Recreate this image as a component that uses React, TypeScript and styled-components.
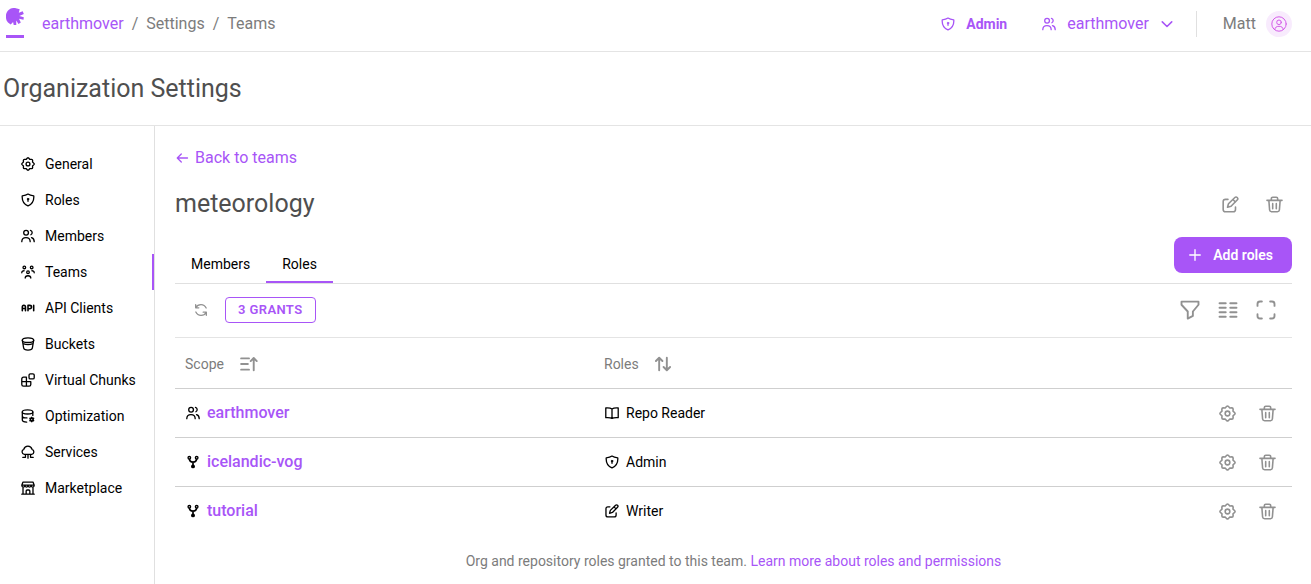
import React from "react";
import styled, { createGlobalStyle } from "styled-components";

const purple = "#a855f7";

const GlobalStyle = createGlobalStyle`
  *, *::before, *::after { box-sizing: border-box; }
  body {
    margin: 0;
    background: #fff;
    color: #000;
    font-family: Roboto, "Liberation Sans", sans-serif;
    font-size: 14px;
    line-height: 20px;
  }
  a { color: ${purple}; text-decoration: none; }
  button { font: inherit; background: none; border: 0; padding: 0; cursor: pointer; }
`;

const Svg = styled.svg<{ $size: number }>`
  width: ${(p) => p.$size}px;
  height: ${(p) => p.$size}px;
  flex: none;
  display: block;
  fill: none;
  stroke: currentColor;
  stroke-width: 1.5;
  stroke-linecap: round;
  stroke-linejoin: round;
`;

const glyphs = {
  gear: (
    <>
      <path d="M7.300 1.200Q8 .6 8.700 1.200L10.200 2.800 12.100 2.700Q13.200 2.800 13.300 3.900L13.200 5.800 14.800 7.300Q15.400 8 14.800 8.700L13.200 10.200 13.300 12.100Q13.200 13.200 12.100 13.300L10.200 13.200 8.700 14.800Q8 15.400 7.300 14.800L5.800 13.200 3.900 13.300Q2.800 13.200 2.700 12.100L2.800 10.200 1.200 8.700Q.6 8 1.200 7.300L2.800 5.800 2.700 3.900Q2.800 2.800 3.900 2.700L5.800 2.800Z" />
      <circle cx="8" cy="8" r="2.200" />
    </>
  ),
  shield: (
    <>
      <path d="M8 1.200C6.400 2.400 4.100 3 1.400 3.200 1 8.600 3 12.800 8 14.800 13 12.800 15 8.600 14.600 3.200 11.900 3 9.600 2.400 8 1.200Z" />
      <circle cx="8" cy="6.900" r=".9" fill="currentColor" strokeWidth="1" />
      <path d="M8 7.500v2" />
    </>
  ),
  people: (
    <>
      <circle cx="5.800" cy="4.200" r="2.700" />
      <path d="M.9 14.500C.9 11.400 2.900 9.800 5.700 9.800S10.500 11.400 10.500 14.500M10.800 1.600a2.700 2.700 0 0 1 .5 5M12 9.900c1.900.5 3.100 2.200 3.100 4.600" />
    </>
  ),
  team: (
    <>
      <circle cx="3.800" cy="2.800" r="1.500" />
      <circle cx="12.200" cy="2.800" r="1.500" />
      <circle cx="8" cy="8.300" r="1.500" />
      <path d="M.9 8.900C.9 7.500 2 6.600 3.500 6.600M15.100 8.900C15.100 7.500 14 6.600 12.500 6.600M4.800 14.900C4.800 13.200 6 12.300 8 12.300s3.200.9 3.200 2.600" />
    </>
  ),
  api: <path d="M1.500 11V7c0-1.500.8-2.200 1.800-2.200S5.100 5.500 5.100 7v4M1.500 8.600h3.600M8 11V5h2c1.300 0 2 .7 2 1.900S11.300 8.800 10 8.800H8M14.500 5v6" strokeWidth="1.800" />,
  bucket: (
    <>
      <ellipse cx="8" cy="3.700" rx="6.500" ry="2.600" />
      <path d="M1.500 3.700 3 12.500C3.300 14.200 5.200 15 8 15s4.700-.8 5-2.500L14.500 3.700M2.400 7.600c3.200 1.300 8 1.300 11.200 0" />
    </>
  ),
  chunks: (
    <>
      <path d="M6.200 4.800H2.800C1.700 4.800.9 5.600.9 6.700v6.500c0 1.100.8 1.900 1.900 1.900h6.500c1.100 0 1.900-.8 1.900-1.900V9.900M.9 9.900h10.300M6.200 4.800v10.300" />
      <rect x="9.200" y=".9" width="5.900" height="5.900" rx="1.500" />
    </>
  ),
  database: (
    <>
      <ellipse cx="7.500" cy="3.300" rx="6" ry="2.400" />
      <path d="M1.500 3.300v9.200c0 1.200 2 2.200 5 2.500M13.500 3.300v4M1.500 7.900c0 1.300 2.300 2.200 5.300 2.300" />
      <path d="m12.300 9.500.6 1.300 1.500-.1-.8 1.300.8 1.300-1.500-.1-.6 1.300-.7-1.300-1.400.1.800-1.300-.8-1.300 1.400.1Z" strokeWidth="1.700" />
    </>
  ),
  cloud: (
    <path d="M3.800 10.700A3 3 0 0 1 3.200 4.900 4.900 4.900 0 0 1 12.600 4.900 3 3 0 0 1 12.300 10.700H3.800M5.100 11v3.100H2M8 11v4M10.900 11v3.100H14" />
  ),
  store: (
    <path d="M2.300 1.200h11.400L15.100 4.800H.9ZM.9 4.800c0 2.800 3.500 2.800 3.600 0 .1 2.800 3.400 2.800 3.500 0 .1 2.800 3.400 2.800 3.500 0 .1 2.800 3.600 2.800 3.600 0M2.300 7v8M13.700 7v8M.9 15h14.200M5.900 15v-3.500c0-.7.500-1.200 1.200-1.200h1.800c.7 0 1.200.5 1.200 1.200V15" />
  ),
  fork: (
    <>
      <circle cx="3.800" cy="3.200" r="1.500" />
      <circle cx="12.200" cy="3.200" r="1.500" />
      <circle cx="8" cy="13" r="1.500" fill="currentColor" />
      <path d="M3.900 4.900c.2 2.300 1.700 3.300 4.100 3.300s3.900-1 4.100-3.300M8 8.200v4" strokeWidth="1.900" />
    </>
  ),
  book: <path d="M8 3.400C6.400 2.300 3.700 2.100.9 2.300V13.300C3.700 13.100 6.400 13.200 8 14.200 9.600 13.200 12.300 13.100 15.100 13.300V2.300C12.300 2.100 9.600 2.300 8 3.400V13.800" />,
  pencil: (
    <>
      <path d="m12.100 1.400c.7-.7 1.600-.6 2.200 0s.8 1.600 0 2.400L8.500 9.700l-3.300.9.900-3.300ZM10.300 3.300l2.300 2.300" />
      <path d="M5.600 3.200H3.300c-1.300 0-2.200.9-2.200 2.200v7.200c0 1.300.9 2.200 2.200 2.200h7.200c1.300 0 2.200-.9 2.200-2.200v-2.300" />
    </>
  ),
  trash: (
    <path d="M.9 4.100h14.200M5 3.900V2.500C5 1.700 5.600 1.200 6.300 1.200h3.400c.7 0 1.300.5 1.300 1.300v1.400M2.700 4.200l.7 9c.1 1 .8 1.600 1.900 1.600h5.400c1.100 0 1.800-.6 1.900-1.600l.7-9M6.300 7.200v4.800M9.700 7.200v4.800" />
  ),
  refresh: (
    <path d="M1.900 1.900v3.600h3.600M2.200 5.200C4.500.8 11.500.5 13.900 5.700M14.100 14.100v-3.600h-3.600M13.800 10.800c-2.300 4.400-9.300 4.700-11.700-.5" />
  ),
  arrowLeft: <path d="M14.300 8H2.700M7.200 3.400 2.600 8l4.600 4.600" />,
  chevron: <path d="m2.600 5.600 5.400 5.200 5.400-5.200" strokeWidth="1.800" />,
  plus: <path d="M8 1v14M1 8h14" strokeWidth="1.800" />,
  avatar: (
    <>
      <circle cx="8" cy="8" r="7.200" />
      <circle cx="8" cy="6.300" r="2.300" />
      <path d="M3.800 13.500c.2-2.200 1.700-3.200 4.200-3.200s4 1 4.200 3.200" />
    </>
  ),
  funnel: <path d="M1.200 1.300h13.600v2.500L10.300 9.200v3.500L6.200 14.900V9.200L1.200 3.800Z" />,
  columns: <path d="M1.200 2.600h5M1.200 6.200h5M1.200 9.800h5M1.200 13.400h5M9.800 2.600h5M9.800 6.200h5M9.800 9.800h5M9.800 13.400h5" />,
  expand: <path d="M1.200 4.700V3.200c0-1.100.9-2 2-2h1.500M11.300 1.200h1.500c1.100 0 2 .9 2 2v1.500M14.800 11.300v1.500c0 1.100-.9 2-2 2h-1.500M4.700 14.800H3.200c-1.100 0-2-.9-2-2v-1.500" />,
  sortAsc: <path d="M1 3h7M1 8h6M1 13h7M12.200 13.500V3M9.500 5.400l2.700-2.700 2.700 2.700" strokeWidth="1.700" />,
  sort: <path d="M4.600 13.500V2.700M1.700 5.300l2.900-2.900 2.900 2.900M11.400 2.500v10.800M8.500 10.700l2.900 2.900 2.900-2.900" strokeWidth="1.700" />,
};

type Glyph = keyof typeof glyphs;

function Icon({ name, size = 14 }: { name: Glyph; size?: number }) {
  return (
    <Svg $size={size} viewBox="0 0 16 16" aria-hidden="true">
      {glyphs[name]}
    </Svg>
  );
}

const Header = styled.header`
  display: flex;
  align-items: center;
  justify-content: space-between;
  height: 52px;
  padding: 0 19px 4px 6px;
  border-bottom: 1px solid #e4e4e4;
  font-size: 16px;
  line-height: 24px;
  color: #7c7c7c;
`;

const HeaderGroup = styled.div`
  display: flex;
  align-items: center;
`;

const Logo = styled.a`
  display: block;
  height: 32px;
  margin-right: 18px;
`;

const Crumbs = styled.ol`
  display: flex;
  gap: 8px;
  margin: 0;
  padding: 0;
  list-style: none;

  a { color: inherit; }
  li:first-child a { color: ${purple}; }
`;

const AdminLink = styled.a`
  display: flex;
  align-items: center;
  gap: 11px;
  margin-right: 35px;
  font-size: 14px;
  font-weight: 700;
`;

const OrgButton = styled.button`
  display: flex;
  align-items: center;
  gap: 11px;
  color: ${purple};
`;

const UserButton = styled.button`
  display: flex;
  align-items: center;
  gap: 10px;
  height: 26px;
  margin-left: 22px;
  padding-left: 26px;
  border-left: 1px solid #e0e0e0;
  color: #7c7c7c;
`;

const Avatar = styled.span`
  display: grid;
  place-items: center;
  width: 26px;
  height: 26px;
  border-radius: 50%;
  background: #f8ebfd;
  color: #d45be8;

  svg { stroke-width: 1; }
`;

const PageTitle = styled.div`
  display: flex;
  align-items: center;
  height: 74px;
  padding: 0 3px;
  border-bottom: 1px solid #e4e4e4;
`;

const Heading = styled.span`
  margin: 0;
  font-size: 25px;
  font-weight: 400;
  line-height: 32px;
  color: #4f4f4f;
`;

const Body = styled.div`
  display: flex;
  min-height: calc(100vh - 126px);
`;

const Sidebar = styled.nav`
  flex: none;
  width: 155px;
  padding-top: 20px;
  border-right: 1px solid #e0e0e0;
`;

const NavItem = styled.a<{ $active?: boolean }>`
  display: flex;
  align-items: center;
  gap: 10px;
  height: 36px;
  padding-left: 21px;
  border-right: 2px solid ${(p) => (p.$active ? purple : "transparent")};
  color: #000;
  white-space: nowrap;
`;

const Main = styled.main`
  flex: 1;
  min-width: 0;
  padding: 20px 19px 0 20px;
`;

const BackLink = styled.a`
  display: inline-flex;
  align-items: center;
  gap: 6px;
  font-size: 16px;
  line-height: 24px;
`;

const TitleRow = styled.div`
  display: flex;
  align-items: center;
  justify-content: space-between;
  height: 68px;
`;

const Actions = styled.div<{ $gap: number; $pad: number }>`
  display: flex;
  align-items: center;
  justify-content: flex-end;
  gap: ${(p) => p.$gap}px;
  padding-right: ${(p) => p.$pad}px;
`;

const IconButton = styled.button`
  color: #919191;
`;

const TabBar = styled.div`
  display: flex;
  justify-content: space-between;
  height: 46px;
  border-bottom: 1px solid #e0e0e0;
`;

const Tabs = styled.div`
  display: flex;
  padding-top: 8px;
`;

const Tab = styled.button<{ $active?: boolean }>`
  padding: 0 16px;
  border-bottom: 2px solid ${(p) => (p.$active ? purple : "transparent")};
  color: #000;
`;

const AddButton = styled.button`
  display: flex;
  align-items: center;
  gap: 12px;
  height: 36px;
  padding: 0 19px 0 15px;
  margin-top: -1px;
  border-radius: 8px;
  background: ${purple};
  color: #fff;
  font-weight: 600;
`;

const Toolbar = styled.div`
  display: flex;
  align-items: center;
  justify-content: space-between;
  height: 54px;
  padding: 0 0 2px 19px;
  border-bottom: 1px solid #e4e4e4;
`;

const Filters = styled.div`
  display: flex;
  align-items: center;
  gap: 17px;
`;

const Chip = styled.button`
  height: 26px;
  padding: 0 12px;
  border: 1px solid ${purple};
  border-radius: 4px;
  color: ${purple};
  font-size: 13px;
  font-weight: 600;
  letter-spacing: 0.4px;
`;

const Table = styled.table`
  width: 100%;
  table-layout: fixed;
  border-collapse: separate;
  border-spacing: 0;
  text-align: left;

  th, td { padding: 0 10px; }
  th { height: 51px; font-weight: 400; color: #7c7c7c; padding-top: 2px; }
  td { height: 49px; }
  th, tr:not(:last-child) td { border-bottom: 1px solid #cfcfcf; }
  tr:last-child td { height: 48px; }
  th:nth-child(1) { width: 419px; }
  th:nth-child(3) { width: 120px; }
`;

const Cell = styled.div<{ $gap: number; $inset?: number }>`
  display: flex;
  align-items: center;
  gap: ${(p) => p.$gap}px;
  padding-left: ${(p) => p.$inset ?? 0}px;
`;

const ScopeLink = styled.a`
  font-size: 16px;
  font-weight: 500;
`;

const Footnote = styled.p`
  margin: 0;
  padding: 16px 0 12px;
  text-align: center;
  color: #7c7c7c;
`;

const nav: [Glyph, string][] = [
  ["gear", "General"],
  ["shield", "Roles"],
  ["people", "Members"],
  ["team", "Teams"],
  ["api", "API Clients"],
  ["bucket", "Buckets"],
  ["chunks", "Virtual Chunks"],
  ["database", "Optimization"],
  ["cloud", "Services"],
  ["store", "Marketplace"],
];

const grants: { icon: Glyph; scope: string; roleIcon: Glyph; role: string }[] = [
  { icon: "people", scope: "earthmover", roleIcon: "book", role: "Repo Reader" },
  { icon: "fork", scope: "icelandic-vog", roleIcon: "shield", role: "Admin" },
  { icon: "fork", scope: "tutorial", roleIcon: "pencil", role: "Writer" },
];

export default function App() {
  return (
    <>
      <GlobalStyle />
      <Header>
        <HeaderGroup>
          <Logo href="#" aria-label="Home">
            <svg width="18" height="32" viewBox="0 0 18 32" fill={purple} aria-hidden="true">
              <path d="M9 0 13.700 1.300 12.800 4.700 16.700 3.300 17.800 6 13.300 7.900 17.800 9.200 17.500 11.800 13 10.700 14.800 14.600 12.500 16 10.200 12.400 10.300 17H7.700L7.100 14 4.700 16.400 2 14.500.6 12.500C-.8 8.500-.2 4.500 2.600 2 4.500.3 6.700-.2 9 0Z" />
              <rect y="27" width="18" height="3" />
            </svg>
          </Logo>
          <nav aria-label="Breadcrumb">
            <Crumbs>
              <li><a href="#">earthmover</a></li>
              <li aria-hidden="true">/</li>
              <li><a href="#">Settings</a></li>
              <li aria-hidden="true">/</li>
              <li><a href="#">Teams</a></li>
            </Crumbs>
          </nav>
        </HeaderGroup>
        <HeaderGroup>
          <AdminLink href="#"><Icon name="shield" />Admin</AdminLink>
          <OrgButton><Icon name="people" />earthmover<Icon name="chevron" /></OrgButton>
          <UserButton>Matt<Avatar><Icon name="avatar" size={16} /></Avatar></UserButton>
        </HeaderGroup>
      </Header>
      <PageTitle><Heading as="h1">Organization Settings</Heading></PageTitle>
      <Body>
        <Sidebar aria-label="Settings">
          {nav.map(([icon, label]) => (
            <NavItem key={label} href="#" $active={label === "Teams"}>
              <Icon name={icon} />{label}
            </NavItem>
          ))}
        </Sidebar>
        <Main>
          <BackLink href="#"><Icon name="arrowLeft" />Back to teams</BackLink>
          <TitleRow>
            <Heading as="h2">meteorology</Heading>
            <Actions $gap={27} $pad={9}>
              <IconButton aria-label="Edit team"><Icon name="pencil" size={17} /></IconButton>
              <IconButton aria-label="Delete team"><Icon name="trash" size={17} /></IconButton>
            </Actions>
          </TitleRow>
          <TabBar>
            <Tabs role="tablist">
              <Tab role="tab" aria-selected={false}>Members</Tab>
              <Tab role="tab" aria-selected $active>Roles</Tab>
            </Tabs>
            <AddButton><Icon name="plus" size={12} />Add roles</AddButton>
          </TabBar>
          <Toolbar>
            <Filters>
              <IconButton aria-label="Refresh"><Icon name="refresh" /></IconButton>
              <Chip>3 GRANTS</Chip>
            </Filters>
            <Actions $gap={18} $pad={16}>
              <IconButton aria-label="Filter"><Icon name="funnel" size={20} /></IconButton>
              <IconButton aria-label="Columns"><Icon name="columns" size={20} /></IconButton>
              <IconButton aria-label="Full screen"><Icon name="expand" size={20} /></IconButton>
            </Actions>
          </Toolbar>
          <Table>
            <thead>
              <tr>
                <th><Cell $gap={16}>Scope<IconButton aria-label="Sorted by scope"><Icon name="sortAsc" size={18} /></IconButton></Cell></th>
                <th><Cell $gap={15}>Roles<IconButton aria-label="Sort by roles"><Icon name="sort" size={18} /></IconButton></Cell></th>
                <th aria-label="Actions" />
              </tr>
            </thead>
            <tbody>
              {grants.map((g) => (
                <tr key={g.scope}>
                  <td><Cell $gap={7} $inset={1}><Icon name={g.icon} /><ScopeLink href="#">{g.scope}</ScopeLink></Cell></td>
                  <td><Cell $gap={7} $inset={1}><Icon name={g.roleIcon} />{g.role}</Cell></td>
                  <td>
                    <Actions $gap={23} $pad={6}>
                      <IconButton aria-label="Configure grant"><Icon name="gear" size={17} /></IconButton>
                      <IconButton aria-label="Delete grant"><Icon name="trash" size={17} /></IconButton>
                    </Actions>
                  </td>
                </tr>
              ))}
            </tbody>
          </Table>
          <Footnote>
            Org and repository roles granted to this team. <a href="#">Learn more about roles and permissions</a>
          </Footnote>
        </Main>
      </Body>
    </>
  );
}
